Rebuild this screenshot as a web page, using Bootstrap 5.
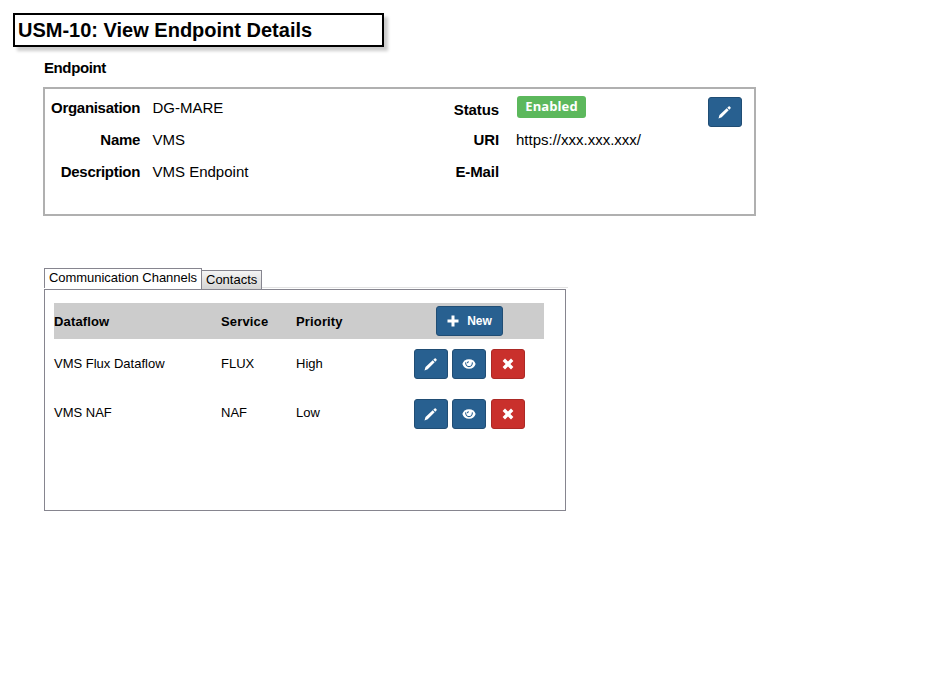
<!DOCTYPE html>
<html lang="en">
<head>
<meta charset="utf-8">
<meta name="viewport" content="width=device-width, initial-scale=1">
<title>USM-10: View Endpoint Details</title>
<link href="https://cdn.jsdelivr.net/npm/bootstrap@5.3.0/dist/css/bootstrap.min.css" rel="stylesheet">
<style>
body{font-family:"Liberation Sans",Arial,sans-serif;color:#000;background:#fff;font-size:13px;line-height:16px}
.page-title{width:371px;height:34px;margin:13px 0 0 13px;padding-left:3px;border:2px solid #000;box-shadow:4px 4px 3px rgba(0,0,0,.2);font-size:20px;line-height:30px;font-weight:700}
.section-title{margin:12px 0 0 44px;font-size:15px;line-height:18px;font-weight:700;letter-spacing:-.4px}
.endpoint-panel{width:713px;height:129px;margin:10px 0 0 43px;border:2px solid #b0b0b0;font-size:15px;padding-top:3px}
.details{display:grid;grid-template-columns:95px 1fr;grid-auto-rows:32px;align-items:center;column-gap:12.500px;margin:0}
.details dt{text-align:right;letter-spacing:-.3px}
.details dd{margin:0}
.details-left{width:357px}
.details-right{width:291px;column-gap:17px;grid-template-columns:97px 1fr}
.details-right dt{letter-spacing:-.1px}
.badge-enabled{display:block;width:69px;height:22px;border-radius:3px;background:#5cb85c;color:#fff;font:700 13px/20px "Open Sans",sans-serif;letter-spacing:.1px;text-align:center;margin:0 0 2px 1px}
.btn-tool{display:inline-flex;align-items:center;justify-content:center;width:34px;height:30px;padding:0;border-radius:3px;border:1px solid #204d74;background:#286090;color:#fff;font-size:13px;line-height:16px}
.btn-tool:hover{background:#204d74;color:#fff}
.btn-remove{background:#c9302c;border-color:#ac2925;margin-left:1px}
.btn-remove:hover{background:#ac2925}
.btn-new{width:67px;gap:8px;margin-left:22px;font-weight:700;font-size:12px}
.btn-tool svg{display:block;fill:currentColor}
.panel-edit{margin:5px 0 0 15px}
.channels{width:522px;margin:52px 0 0 44px}
.channel-tabs{height:21px;width:524px;border:0;align-items:flex-end;background:linear-gradient(#e3e3e3,#e3e3e3) 0 19px/100% 1px no-repeat}
.channel-tabs .nav-link{border:1px solid #86858f;border-radius:0;padding:0 4px;color:#000;margin:0;white-space:nowrap}
.channel-tabs .nav-link.active{width:158px;height:20px;line-height:18px;margin-bottom:1px;border-color:#86858f;border-bottom:0;background:#fff;color:#000;letter-spacing:-.04px}
.channel-tabs .nav-link.idle{width:61px;height:19px;line-height:18px;margin-left:-1px;border-bottom:0;background:linear-gradient(#f4f4f4,#d4d4d4)}
.channel-box{height:222px;border:1px solid #86858f;padding:13px 0 0 9px}
.channel-table{width:490px;table-layout:fixed;border-collapse:collapse}
.channel-table th,.channel-table td{padding:0;vertical-align:middle}
.channel-table thead tr{height:36px;background:#ccc}
.channel-table th{letter-spacing:.15px}
.channel-table th:not(:last-child){padding-top:2px}
.channel-table tbody tr{height:50px}
.channel-table tbody tr:last-child td:not(:last-child){padding-bottom:2px}
</style>
</head>
<body>
<svg class="d-none" xmlns="http://www.w3.org/2000/svg">
<symbol id="pencil" viewBox="0 0 14 14"><path d="M.5 13.400 1.500 10 8.700 3.300 10.700 5.300 3.700 12.300ZM9.300 2.700 10.600 1.500Q11.200 1 11.800 1.500L12.500 2.200Q13 2.800 12.500 3.400L11.300 4.700Z"/></symbol>
<symbol id="eye" viewBox="0 0 14 14"><path d="M7 2.200C3.600 2.200 1.200 4.200.4 7c.8 2.800 3.200 4.800 6.600 4.800s5.800-2 6.600-4.800C12.800 4.200 10.400 2.200 7 2.200Z"/><path d="M3.700 5.300C2.900 11 11.100 11 10.300 5.300M5.300 6.200Q5.500 4.900 6.900 4.700" fill="none" stroke="#286090" stroke-width="1.100"/></symbol>
<symbol id="cross" viewBox="0 0 14 14"><path d="M4 1.600 7 4.600 10 1.600 12.400 4 9.400 7 12.400 10 10 12.400 7 9.400 4 12.400 1.600 10 4.600 7 1.600 4Z"/></symbol>
<symbol id="plus" viewBox="0 0 12 12"><path d="M4.500.500h3v4h4v3h-4v4h-3v-4h-4v-3h4Z"/></symbol>
</svg>

<h1 class="page-title mb-0">USM-10: View Endpoint Details</h1>
<h2 class="section-title mb-0">Endpoint</h2>

<section class="endpoint-panel d-flex align-items-start">
  <dl class="details details-left">
    <dt>Organisation</dt><dd>DG-MARE</dd>
    <dt>Name</dt><dd>VMS</dd>
    <dt>Description</dt><dd>VMS Endpoint</dd>
  </dl>
  <dl class="details details-right">
    <dt class="pt-1">Status</dt><dd><span class="badge-enabled">Enabled</span></dd>
    <dt>URI</dt><dd>https://xxx.xxx.xxx/</dd>
    <dt>E-Mail</dt><dd></dd>
  </dl>
  <button type="button" class="btn btn-tool panel-edit" aria-label="Edit"><svg width="14" height="14"><use href="#pencil"/></svg></button>
</section>

<section class="channels">
  <div class="nav nav-tabs channel-tabs" role="tablist">
    <a class="nav-link active" role="tab">Communication Channels</a>
    <a class="nav-link idle" role="tab">Contacts</a>
  </div>
  <div class="channel-box">
    <table class="channel-table">
      <colgroup><col style="width:167px"><col style="width:75px"><col style="width:118px"><col style="width:130px"></colgroup>
      <thead>
        <tr><th>Dataflow</th><th>Service</th><th>Priority</th>
          <th><button type="button" class="btn btn-tool btn-new"><svg width="12" height="12"><use href="#plus"/></svg>New</button></th></tr>
      </thead>
      <tbody>
        <tr><td>VMS Flux Dataflow</td><td>FLUX</td><td>High</td>
          <td><div class="d-flex gap-1">
            <button type="button" class="btn btn-tool" aria-label="Edit"><svg width="14" height="14"><use href="#pencil"/></svg></button>
            <button type="button" class="btn btn-tool" aria-label="View"><svg width="14" height="14"><use href="#eye"/></svg></button>
            <button type="button" class="btn btn-tool btn-remove" aria-label="Remove"><svg width="14" height="14"><use href="#cross"/></svg></button>
          </div></td></tr>
        <tr><td>VMS NAF</td><td>NAF</td><td>Low</td>
          <td><div class="d-flex gap-1">
            <button type="button" class="btn btn-tool" aria-label="Edit"><svg width="14" height="14"><use href="#pencil"/></svg></button>
            <button type="button" class="btn btn-tool" aria-label="View"><svg width="14" height="14"><use href="#eye"/></svg></button>
            <button type="button" class="btn btn-tool btn-remove" aria-label="Remove"><svg width="14" height="14"><use href="#cross"/></svg></button>
          </div></td></tr>
      </tbody>
    </table>
  </div>
</section>
<script src="https://cdn.jsdelivr.net/npm/bootstrap@5.3.0/dist/js/bootstrap.bundle.min.js"></script>
</body>
</html>
